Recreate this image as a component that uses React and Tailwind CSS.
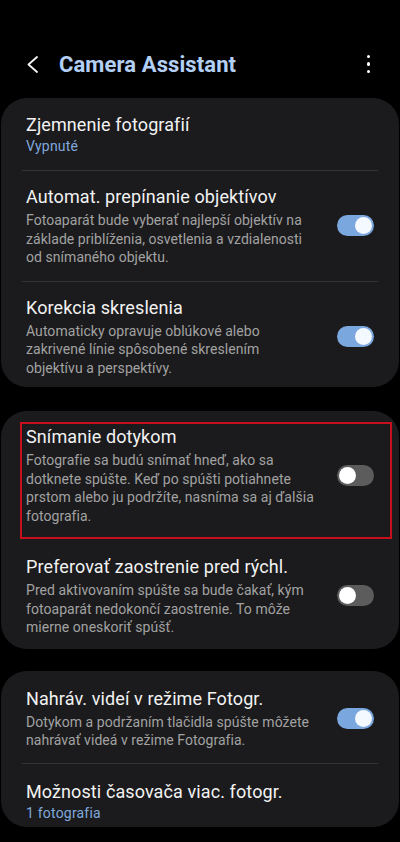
import { useState } from "react";

const font = { fontFamily: "Roboto, 'Noto Sans', sans-serif" };

function Toggle({ on }) {
  return (
    <div
      className={
        "relative w-[37px] h-[21px] rounded-full shrink-0 flex items-center px-[2px] " +
        (on ? "bg-[#7ba7df] justify-end" : "bg-[#5c5c5c] justify-start")
      }
    >
      <div className={"w-[17px] h-[17px] rounded-full " + (on ? "bg-[#f4f8ff]" : "bg-white")} />
    </div>
  );
}

function Divider() {
  return <div className="mx-[21px] h-px bg-[#333335]" />;
}

function Row({ title, sub, desc, toggle, pt = "pt-[14px]", pb = "pb-[14px]", highlight }) {
  return (
    <div className={"relative flex items-center pl-[25px] pr-[25px] " + pt + " " + pb}>
      {highlight && (
        <div className="absolute left-[19px] right-[7px] top-[11px] bottom-0 border-2 border-[#c8101c] pointer-events-none" />
      )}
      <div className="flex-1 min-w-0">
        <div className="text-[18px] leading-[24px] text-[#f2f2f2] tracking-[0.1px]">{title}</div>
        {sub && <div className="text-[14px] leading-[19px] text-[#80a8dc] tracking-[0.2px]">{sub}</div>}
        {desc && (
          <div className="text-[14px] leading-[18.5px] text-[#a2a2a2] tracking-[0.05px] mt-[2px]">
            {desc.map((line) => (
              <div key={line} className="whitespace-nowrap">{line}</div>
            ))}
          </div>
        )}
      </div>
      {toggle !== undefined && <Toggle on={toggle} />}
    </div>
  );
}

export default function App() {
  const [settings] = useState({ auto: true, korekcia: true, dotyk: false, zaostr: false, video: true });

  return (
    <div className="w-[400px] h-[842px] bg-black overflow-hidden" style={font}>
      <div className="h-[98px] pt-[30px] flex items-center pl-[27px] pr-[30px]">
        <svg width="11" height="17" viewBox="0 0 11 17" fill="none">
          <polyline points="10,1 1.5,8.5 10,16" stroke="#f5f5f5" strokeWidth="1.8" strokeLinecap="round" strokeLinejoin="round" />
        </svg>
        <div className="ml-[21px] text-[22px] font-bold text-[#b3cff4] tracking-[0.1px]">Camera Assistant</div>
        <div className="ml-auto flex flex-col gap-[4px] items-center">
          <div className="w-[3.5px] h-[3.5px] rounded-full bg-white" />
          <div className="w-[3.5px] h-[3.5px] rounded-full bg-white" />
          <div className="w-[3.5px] h-[3.5px] rounded-full bg-white" />
        </div>
      </div>

      <div className="mx-px rounded-[26px] bg-[#1b1b1d]">
        <Row title="Zjemnenie fotografií" sub="Vypnuté" pt="pt-[15px]" />
        <Divider />
        <Row
          title="Automat. prepínanie objektívov"
          desc={[
            "Fotoaparát bude vyberať najlepší objektív na",
            "základe priblíženia, osvetlenia a vzdialenosti",
            "od snímaného objektu.",
          ]}
          toggle={settings.auto}
        />
        <Divider />
        <Row
          title="Korekcia skreslenia"
          desc={[
            "Automaticky opravuje oblúkové alebo",
            "zakrivené línie spôsobené skreslením",
            "objektívu a perspektívy.",
          ]}
          toggle={settings.korekcia}
          pb="pb-[10px]"
        />
      </div>

      <div className="mx-px mt-[24px] rounded-[26px] bg-[#1b1b1d]">
        <Row
          title="Snímanie dotykom"
          desc={[
            "Fotografie sa budú snímať hneď, ako sa",
            "dotknete spúšte. Keď po spúšti potiahnete",
            "prstom alebo ju podržíte, nasníma sa aj ďalšia",
            "fotografia.",
          ]}
          toggle={settings.dotyk}
          highlight
        />
        <Row
          title="Preferovať zaostrenie pred rýchl."
          desc={[
            "Pred aktivovaním spúšte sa bude čakať, kým",
            "fotoaparát nedokončí zaostrenie. To môže",
            "mierne oneskoriť spúšť.",
          ]}
          toggle={settings.zaostr}
          pt="pt-[16px]"
          pb="pb-[12px]"
        />
      </div>

      <div className="mx-px mt-[22px] rounded-[26px] bg-[#1b1b1d]">
        <Row
          title="Nahráv. videí v režime Fotogr."
          desc={[
            "Dotykom a podržaním tlačidla spúšte môžete",
            "nahrávať videá v režime Fotografia.",
          ]}
          toggle={settings.video}
          pt="pt-[16px]"
          pb="pb-[13px]"
        />
        <Divider />
        <Row title="Možnosti časovača viac. fotogr." sub="1 fotografia" pt="pt-[16px]" pb="pb-[4px]" />
      </div>
    </div>
  );
}
